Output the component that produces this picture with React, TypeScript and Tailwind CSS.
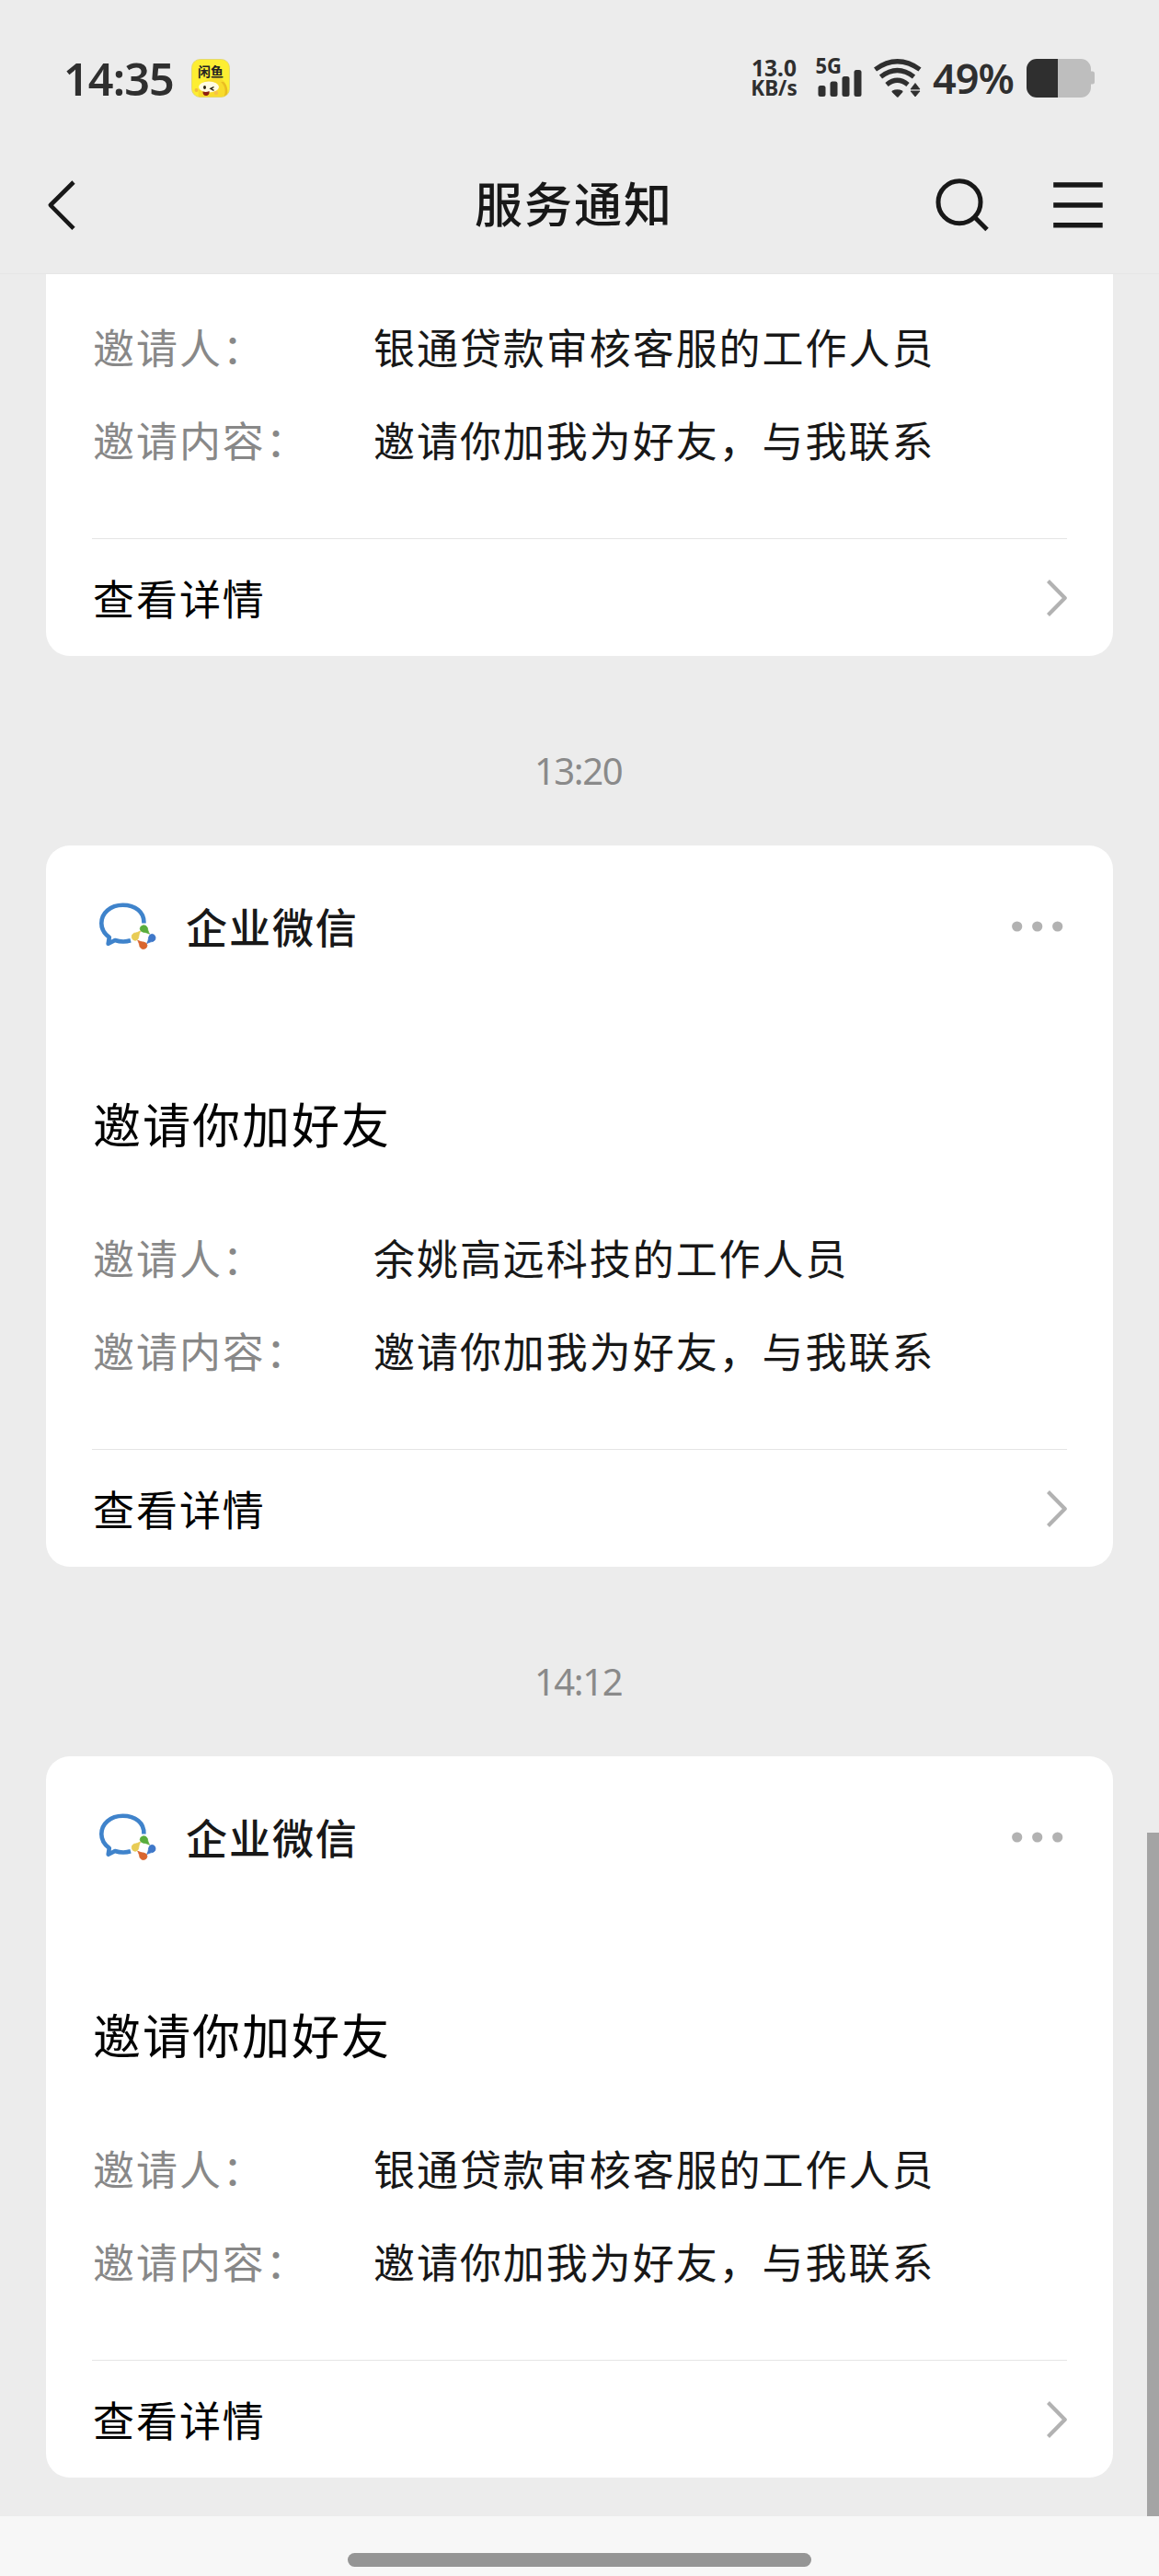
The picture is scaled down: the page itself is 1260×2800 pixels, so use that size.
import React from "react";

type Notice = { inviter: string; content: string };

const FIRST: Notice = { inviter: "银通贷款审核客服的工作人员", content: "邀请你加我为好友，与我联系" };
const SECOND: Notice = { inviter: "余姚高远科技的工作人员", content: "邀请你加我为好友，与我联系" };

function XianyuIcon() {
  return (
    <svg width="42" height="42" viewBox="0 0 42 42" className="ml-[19px] shrink-0">
      <defs>
        <clipPath id="appClip"><rect x="0.5" y="0.5" width="41" height="41" rx="9" /></clipPath>
      </defs>
      <g clipPath="url(#appClip)">
        <rect width="42" height="42" fill="#fdee32" />
        <path d="M8 42C6 28 14 22 23 22c3-3 9-3 13 3 3 4 3 11 1 17z" fill="#f8dc2c" />
        <path d="M32 25c5 4 6 11 3 17h3c3-6 1-14-3-17z" fill="#e9bd22" />
        <ellipse cx="19" cy="30.500" rx="11" ry="6" fill="#fffbe2" />
        <circle cx="5.500" cy="34" r="2" fill="#f2bd3a" />
        <circle cx="27" cy="37" r="2.200" fill="#f7c04a" />
      </g>
      <rect x="0.5" y="0.5" width="41" height="41" rx="9" fill="none" stroke="#dfd36a" strokeWidth="0.8" />
      <ellipse cx="14.500" cy="31" rx="1.500" ry="2" fill="#28200f" />
      <path d="M24.500 30.500l-3.500 1.800 3.500 2" fill="none" stroke="#28200f" strokeWidth="1.400" />
      <path d="M12.500 35.500q3.500 1.200 7-.5c.5 3-1.200 5-3.500 5s-3.800-2-3.500-4.500z" fill="#8e1d12" />
      <text x="7" y="18.800" fontSize="14" fontWeight="700" fill="#222">闲鱼</text>
    </svg>
  );
}

function Signal() {
  return (
    <svg width="52" height="44" viewBox="887 63 52 44" className="ml-[19px] shrink-0 overflow-visible" fill="#2f2f2f">
      <text x="887.500" y="80" fontSize="22.500" fontWeight="700" textLength="28.500" lengthAdjust="spacingAndGlyphs">5G</text>
      <rect x="890.500" y="93" width="8" height="12" rx="2.500" />
      <rect x="903.500" y="88.500" width="8" height="16.500" rx="2.500" />
      <rect x="916.500" y="83" width="8" height="22" rx="2.500" />
      <rect x="929.500" y="76" width="8" height="29" rx="2.500" />
    </svg>
  );
}

function Wifi() {
  return (
    <svg width="52" height="44" viewBox="951 62 52 44" className="ml-[12px] shrink-0" fill="none" stroke="#2f2f2f" strokeWidth="5.200">
      <path d="M952.500 74.500Q976.500 57 1001 74.500" />
      <path d="M958.500 82.500Q976.500 68.500 994.500 82.500" />
      <path d="M965 91Q976.500 81.500 988 91" />
      <path d="M971.500 98.500Q976.500 96 981.500 98.500L976.800 103.800z" fill="#2f2f2f" strokeWidth="2" strokeLinejoin="round" />
      <path d="M996 89.500l5 6.500h-10zM996 104l5-6h-10z" fill="#2f2f2f" strokeWidth="0.800" strokeLinejoin="round" />
    </svg>
  );
}

function Battery() {
  return (
    <svg width="75" height="42" viewBox="1116 64 75 42" className="ml-[10px] shrink-0">
      <path d="M1150 64H1175a11 11 0 0 1 11 11v2.500h1.500a2.500 2.500 0 0 1 2.500 2.500v9a2.500 2.500 0 0 1-2.500 2.500H1186V95a11 11 0 0 1-11 11H1150z" fill="#bebebe" />
      <path d="M1150 64v42h-23a11 11 0 0 1-11-11V75a11 11 0 0 1 11-11z" fill="#2f2f2f" />
    </svg>
  );
}

function StatusBar() {
  return (
    <div className="flex h-[148px] items-center pt-[22px] pl-[69px] font-['Noto_Sans','Noto_Sans_CJK_SC',sans-serif] text-[#2f2f2f]">
      <div className="mb-[1px] w-[120px] text-[48.500px] leading-[60px] font-semibold tracking-[-0.9px] whitespace-nowrap">14:35</div>
      <XianyuIcon />
      <div className="ml-[566px] w-[51px] text-center text-[24.500px] leading-[22px] font-bold whitespace-nowrap">
        <div>13.0</div>
        <div className="text-[22.500px]">KB/s</div>
      </div>
      <Signal />
      <Wifi />
      <div className="mb-[1px] ml-[12px] w-[92px] text-[45px] leading-[60px] font-semibold tracking-[-1px] whitespace-nowrap">49%</div>
      <Battery />
    </div>
  );
}

function NavBar() {
  return (
    <header className="flex h-[149px] items-center pl-[50px] text-[#181818]">
      <svg width="34" height="58" viewBox="50 193.500 34 58" fill="none" stroke="#181818" strokeWidth="4.600" strokeLinejoin="round">
        <path d="M80 197.500L54.800 222.500L80 247.800" />
      </svg>
      <h1 className="mb-[5px] ml-[432px] w-[216px] text-[52px] leading-[70px] font-medium tracking-[2px] whitespace-nowrap">服务通知</h1>
      <svg width="60" height="60" viewBox="1015 192.500 60 60" fill="none" stroke="#181818" strokeWidth="5" className="ml-[283px]">
        <circle cx="1043" cy="219.300" r="23" />
        <path d="M1059.500 235.500L1073 249" />
      </svg>
      <svg width="54" height="50" viewBox="1145.500 198 54 50" fill="#181818" className="ml-[70px]">
        <rect x="1145.700" y="198.200" width="53.500" height="5.500" />
        <rect x="1145.700" y="220.200" width="53.500" height="5.500" />
        <rect x="1145.700" y="242" width="53.500" height="5.500" />
      </svg>
    </header>
  );
}

function WeComLogo() {
  return (
    <svg width="72" height="60" viewBox="100 977 72 60" className="shrink-0">
      <path d="M156.400 1003.500C157 991 147 983.700 133.500 983.700C120 983.700 110.300 992.500 110.300 1003.500C110.300 1010 113.500 1015 118.800 1018.800L117.700 1025.700L125 1022C130 1023.600 137 1023.800 142 1022.300" fill="none" stroke="#3f83cb" strokeWidth="4.600" strokeLinejoin="round" />
      <g strokeWidth="0.800" strokeLinejoin="round">
        <path d="M152.200 1009.500a4.200 4.200 0 0 1 8-1.300c.4 2.500 1 4.500 2.300 7c-2.300-1.200-4-1.700-6.700-2a4.200 4.200 0 0 1-3.600-3.700z" fill="#59ad3c" stroke="#59ad3c" />
        <path d="M165.300 1015.300a4.200 4.200 0 0 1 1.300 8c-2.500.4-4.500 1-7 2.300c1.200-2.300 1.700-4 2-6.700a4.200 4.200 0 0 1 3.700-3.600z" fill="#3f78c9" stroke="#3f78c9" />
        <path d="M160 1027.800a4.200 4.200 0 0 1-8 1.300c-.4-2.500-1-4.500-2.300-7c2.300 1.200 4 1.700 6.700 2a4.200 4.200 0 0 1 3.600 3.700z" fill="#d9662f" stroke="#d9662f" />
        <path d="M147 1022.300a4.200 4.200 0 0 1-1.300-8c2.500-.4 4.500-1 7-2.300c-1.200 2.300-1.700 4-2 6.700a4.200 4.200 0 0 1-3.700 3.600z" fill="#e8cc55" stroke="#e8cc55" />
      </g>
    </svg>
  );
}

function NoticeRows({ notice }: { notice: Notice }) {
  return (
    <dl className="pt-px text-[45px] leading-[101px] tracking-[1.95px] whitespace-nowrap">
      <div className="flex">
        <dt className="w-[305px] text-[#888888]">邀请人：</dt>
        <dd className="text-[#181818]">{notice.inviter}</dd>
      </div>
      <div className="flex">
        <dt className="w-[305px] text-[#888888]">邀请内容：</dt>
        <dd className="text-[#181818]">{notice.content}</dd>
      </div>
    </dl>
  );
}

function DetailLink() {
  return (
    <div className="-ml-px mt-[57px] flex h-[128px] items-center justify-between border-t border-[#e5e5e5] pl-px">
      <span className="text-[45px] leading-[60px] tracking-[1.95px] text-black">查看详情</span>
      <svg width="24" height="42" viewBox="0 0 24 42" fill="none" stroke="#b2b2b2" strokeWidth="4.200" strokeLinejoin="round">
        <path d="M3.500 2.500L21.700 21L3.500 39.500" />
      </svg>
    </div>
  );
}

function NoticeCard({ notice }: { notice: Notice }) {
  return (
    <section className="mx-[50px] h-[784px] rounded-[26px] bg-white pr-[50px] pl-[51px]">
      <div className="-ml-px flex h-[176px] items-center">
        <WeComLogo />
        <span className="ml-[30px] text-[45px] leading-[60px] font-medium tracking-[1.950px] text-[#181818]">企业微信</span>
        <svg width="56" height="12" viewBox="1100 1 56 12" fill="#b2b2b2" className="mr-[4px] ml-auto">
          <circle cx="1105.700" cy="7" r="5.600" />
          <circle cx="1127.700" cy="7" r="5.600" />
          <circle cx="1149.700" cy="7" r="5.600" />
        </svg>
      </div>
      <h2 className="mt-[96px] mb-[64px] text-[52px] leading-[60px] font-normal tracking-[2px] text-black">邀请你加好友</h2>
      <NoticeRows notice={notice} />
      <DetailLink />
    </section>
  );
}

function TimeStamp({ time }: { time: string }) {
  return (
    <div className="flex h-[206px] items-center justify-center pt-[44px] pr-[3px] font-['Noto_Sans',sans-serif] text-[40px] leading-[60px] tracking-[-1.400px] text-[#8a8a8a]">
      {time}
    </div>
  );
}

export default function App() {
  return (
    <div lang="zh-CN" className="relative flex h-[2800px] w-[1260px] flex-col overflow-hidden bg-[#ececec] font-['Noto_Sans_CJK_SC',sans-serif]">
      <StatusBar />
      <NavBar />
      <div className="h-px bg-[#e6e6e6]" />
      <main className="h-[2437px]">
        <section className="mx-[50px] h-[415px] rounded-b-[26px] bg-white pt-[27px] pr-[50px] pl-[51px]">
          <NoticeRows notice={FIRST} />
          <DetailLink />
        </section>
        <TimeStamp time="13:20" />
        <NoticeCard notice={SECOND} />
        <TimeStamp time="14:12" />
        <NoticeCard notice={FIRST} />
      </main>
      <footer className="flex h-[65px] justify-center bg-[#f7f7f7] pt-[40px]">
        <div className="h-[15px] w-[504px] rounded-full bg-[#959595]" />
      </footer>
      <div className="absolute top-[1992px] right-0 h-[743px] w-[13px] bg-[#a4a4a4]" />
    </div>
  );
}
